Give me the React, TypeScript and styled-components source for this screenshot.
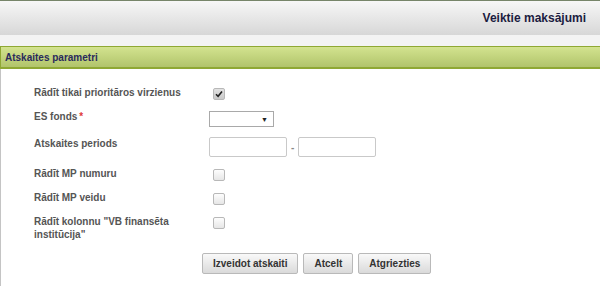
import styled, { createGlobalStyle } from 'styled-components';

const GlobalStyle = createGlobalStyle`
  html, body {
    margin: 0;
    padding: 0;
    background: #f3f3f3;
  }
  body {
    font-family: 'Liberation Sans', Arial, sans-serif;
  }
`;

const Page = styled.div`
  width: 600px;
  height: 286px;
  overflow: hidden;
  background: #f3f3f3;
  display: flex;
  flex-direction: column;
`;

const TopBar = styled.div`
  height: 34px;
  border-top: 1px solid #77856a;
  background: linear-gradient(#f7f7f7, #d7d7d7);
  display: flex;
  align-items: center;
  justify-content: flex-end;
  padding-right: 14px;
`;

const Title = styled.h1`
  margin: 0;
  font-size: 12px;
  font-weight: bold;
  color: #1c1c40;
`;

const Panel = styled.div`
  margin-top: 11px;
  flex: 1;
  display: flex;
  flex-direction: column;
`;

const PanelHeader = styled.div`
  height: 20px;
  border-top: 1px solid #8fa833;
  border-bottom: 2px solid #8fa833;
  border-left: 1px solid #8fa833;
  background: linear-gradient(#d3e38f, #b1c46b);
  display: flex;
  align-items: center;
  padding-left: 4px;
  font-size: 10px;
  font-weight: bold;
  color: #2a2a5c;
`;

const PanelBody = styled.div`
  flex: 1;
  background: #fff;
  border-left: 1px solid #c4c4c4;
  padding: 17px 0 0 33px;
  display: flex;
  flex-direction: column;
  gap: 10px;
`;

const Row = styled.div`
  display: flex;
  align-items: flex-start;
`;

const Label = styled.div`
  width: 150px;
  margin-right: 25px;
  font-size: 10px;
  font-weight: bold;
  line-height: 13px;
  color: #555;
`;

const Required = styled.span`
  color: #e03a3a;
  margin-left: 2px;
`;

const Check = styled.span<{ $checked?: boolean }>`
  display: flex;
  align-items: center;
  justify-content: center;
  width: 10px;
  height: 10px;
  margin: 2px 0 0 4px;
  border: 1px solid #b8b8b8;
  border-radius: 2px;
  background: ${(p) =>
    p.$checked ? 'linear-gradient(#e2e2e2, #c9c9c9)' : 'linear-gradient(#fdfdfd, #e6e6e6)'};
`;

const Select = styled.div`
  width: 58px;
  height: 14px;
  margin-top: 1px;
  border: 1px solid #a9a9a9;
  background: #fff;
  display: flex;
  align-items: center;
  justify-content: flex-end;
  padding-right: 5px;
  font-size: 7px;
  color: #222;
`;

const Period = styled.div`
  display: flex;
  align-items: center;
  gap: 4px;
  font-size: 10px;
  font-weight: bold;
  color: #888;
`;

const TextInput = styled.div`
  width: 76px;
  height: 18px;
  border: 1px solid #c9c9c9;
  border-radius: 2px;
  background: #fff;
`;

const Buttons = styled.div`
  display: flex;
  gap: 5px;
  margin: 2px 0 0 168px;
`;

const Button = styled.button`
  height: 21px;
  padding: 0 10px;
  border: 1px solid #b9b9b9;
  border-radius: 2px;
  background: linear-gradient(#f9f9f9, #dadada);
  font-family: 'Liberation Sans', Arial, sans-serif;
  font-size: 10px;
  font-weight: bold;
  color: #333;
`;

const Tick = () => (
  <svg width="8" height="8" viewBox="0 0 8 8">
    <path d="M1 4.2 L3.1 6.3 L7 1.4" fill="none" stroke="#222" strokeWidth="1.6" />
  </svg>
);

export default function App() {
  return (
    <Page>
      <GlobalStyle />
      <TopBar>
        <Title>Veiktie maksājumi</Title>
      </TopBar>
      <Panel>
        <PanelHeader>Atskaites parametri</PanelHeader>
        <PanelBody>
          <Row>
            <Label>Rādīt tikai prioritāros virzienus</Label>
            <Check $checked>
              <Tick />
            </Check>
          </Row>
          <Row>
            <Label>
              ES fonds<Required>*</Required>
            </Label>
            <Select>▼</Select>
          </Row>
          <Row>
            <Label>Atskaites periods</Label>
            <Period>
              <TextInput />
              -
              <TextInput />
            </Period>
          </Row>
          <Row>
            <Label>Rādīt MP numuru</Label>
            <Check />
          </Row>
          <Row>
            <Label>Rādīt MP veidu</Label>
            <Check />
          </Row>
          <Row>
            <Label>Rādīt kolonnu "VB finansēta institūcija"</Label>
            <Check />
          </Row>
          <Buttons>
            <Button>Izveidot atskaiti</Button>
            <Button>Atcelt</Button>
            <Button>Atgriezties</Button>
          </Buttons>
        </PanelBody>
      </Panel>
    </Page>
  );
}
